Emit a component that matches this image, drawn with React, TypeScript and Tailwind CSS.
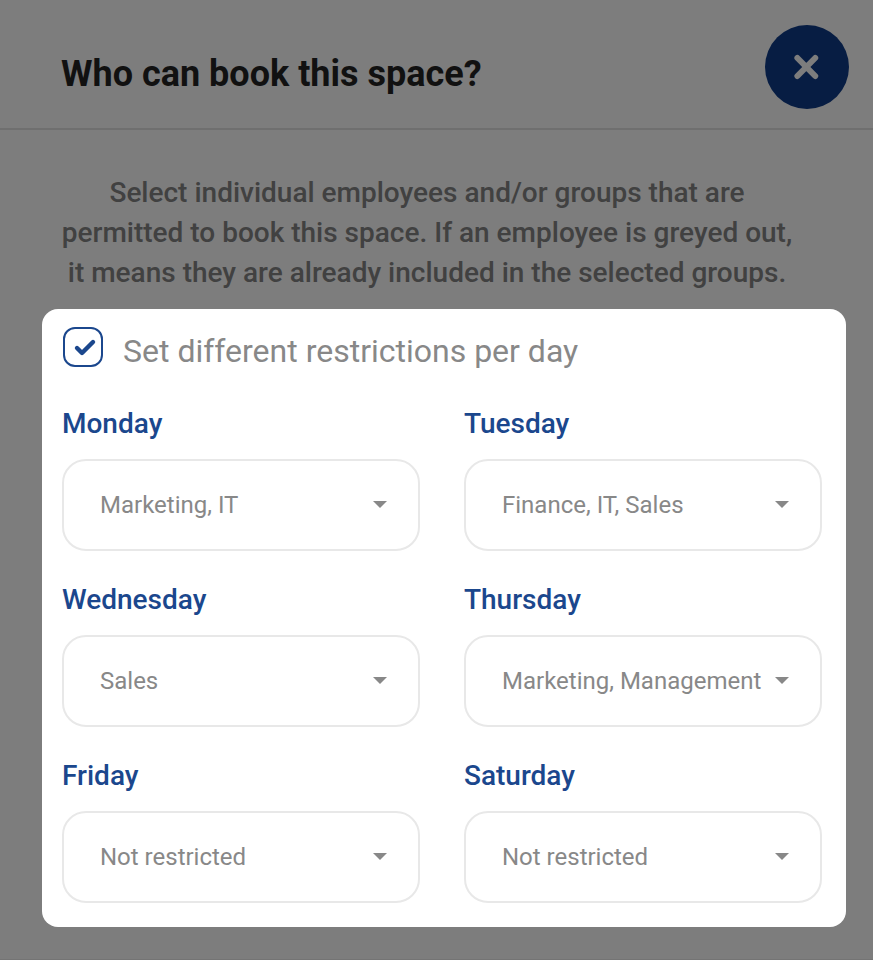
import { useState } from "react";

const groups = ["Not restricted", "Marketing, IT", "Finance, IT, Sales", "Sales", "Marketing, Management"];

const days = [
  { name: "Monday", value: "Marketing, IT" },
  { name: "Tuesday", value: "Finance, IT, Sales" },
  { name: "Wednesday", value: "Sales" },
  { name: "Thursday", value: "Marketing, Management" },
  { name: "Friday", value: "Not restricted" },
  { name: "Saturday", value: "Not restricted" },
];

function DaySelect({ name, value }: { name: string; value: string }) {
  const id = `restriction-${name.toLowerCase()}`;
  return (
    <div className="flex min-w-0 flex-col gap-3.5">
      <label htmlFor={id} className="text-[28px] leading-[42px] font-medium text-[#1b478d]">
        {name}
      </label>
      <div className="relative">
        <select
          id={id}
          defaultValue={value}
          className="h-[92px] w-full appearance-none rounded-3xl border-2 border-[#e8e8e8] bg-white pr-12 pl-9 text-2xl text-[#888888]"
        >
          {groups.map((group) => (
            <option key={group}>{group}</option>
          ))}
        </select>
        <svg
          viewBox="0 0 14 7"
          className="pointer-events-none absolute top-[42px] right-[33px] h-[7px] w-[14px] fill-[#888888]"
          aria-hidden="true"
        >
          <path d="M0 0h14L7 7z" />
        </svg>
      </div>
    </div>
  );
}

export default function App() {
  const [perDay, setPerDay] = useState(true);

  return (
    <main className="min-h-screen border-b border-[#747474] bg-[#7d7d7d] font-[Roboto,sans-serif]">
      <header className="flex h-[130px] items-center justify-between border-b-2 border-[#6f6f6f] pt-1.5 pr-6 pl-[61px]">
        <h1 className="pt-3.5 text-4xl font-bold text-[#111111]">Who can book this space?</h1>
        <button
          type="button"
          aria-label="Close"
          className="flex size-[84px] items-center justify-center rounded-full bg-[#071d43]"
        >
          <svg viewBox="0 0 26 26" className="size-[26px] stroke-[#7d7d7d]" fill="none" strokeWidth="6" strokeLinecap="round" aria-hidden="true">
            <path d="M3.4 4L21.2 22M21.2 4L3.4 22" />
          </svg>
        </button>
      </header>

      <p className="mt-[43px] pr-[79px] pl-[60px] text-center text-[28px] leading-10 font-medium text-[#414141]">
        Select individual employees and/or groups that are permitted to book this space. If an employee is greyed out, it
        means they are already included in the selected groups.
      </p>

      <section className="mt-4 mr-[27px] ml-[42px] rounded-2xl bg-white pt-[18px] pr-6 pb-6 pl-5">
        <label className="flex items-start gap-5 pl-px">
          <span className="relative size-10 shrink-0">
            <input
              type="checkbox"
              checked={perDay}
              onChange={() => setPerDay(!perDay)}
              className="peer block size-10 appearance-none rounded-xl border-2 border-[#1b478d] bg-white"
            />
            <svg
              viewBox="0 0 40 40"
              className="pointer-events-none absolute inset-0 hidden stroke-[#1b478d] peer-checked:block"
              fill="none"
              strokeWidth="4.4"
              strokeLinecap="round"
              strokeLinejoin="round"
              aria-hidden="true"
            >
              <path d="M14 21l5 5L30 15" />
            </svg>
          </span>
          <span className="pt-1 text-[32px] leading-10 text-[#888888]">Set different restrictions per day</span>
        </label>

        <div className="mt-8 grid grid-cols-2 gap-x-11 gap-y-7">
          {days.map((day) => (
            <DaySelect key={day.name} name={day.name} value={day.value} />
          ))}
        </div>
      </section>
    </main>
  );
}
